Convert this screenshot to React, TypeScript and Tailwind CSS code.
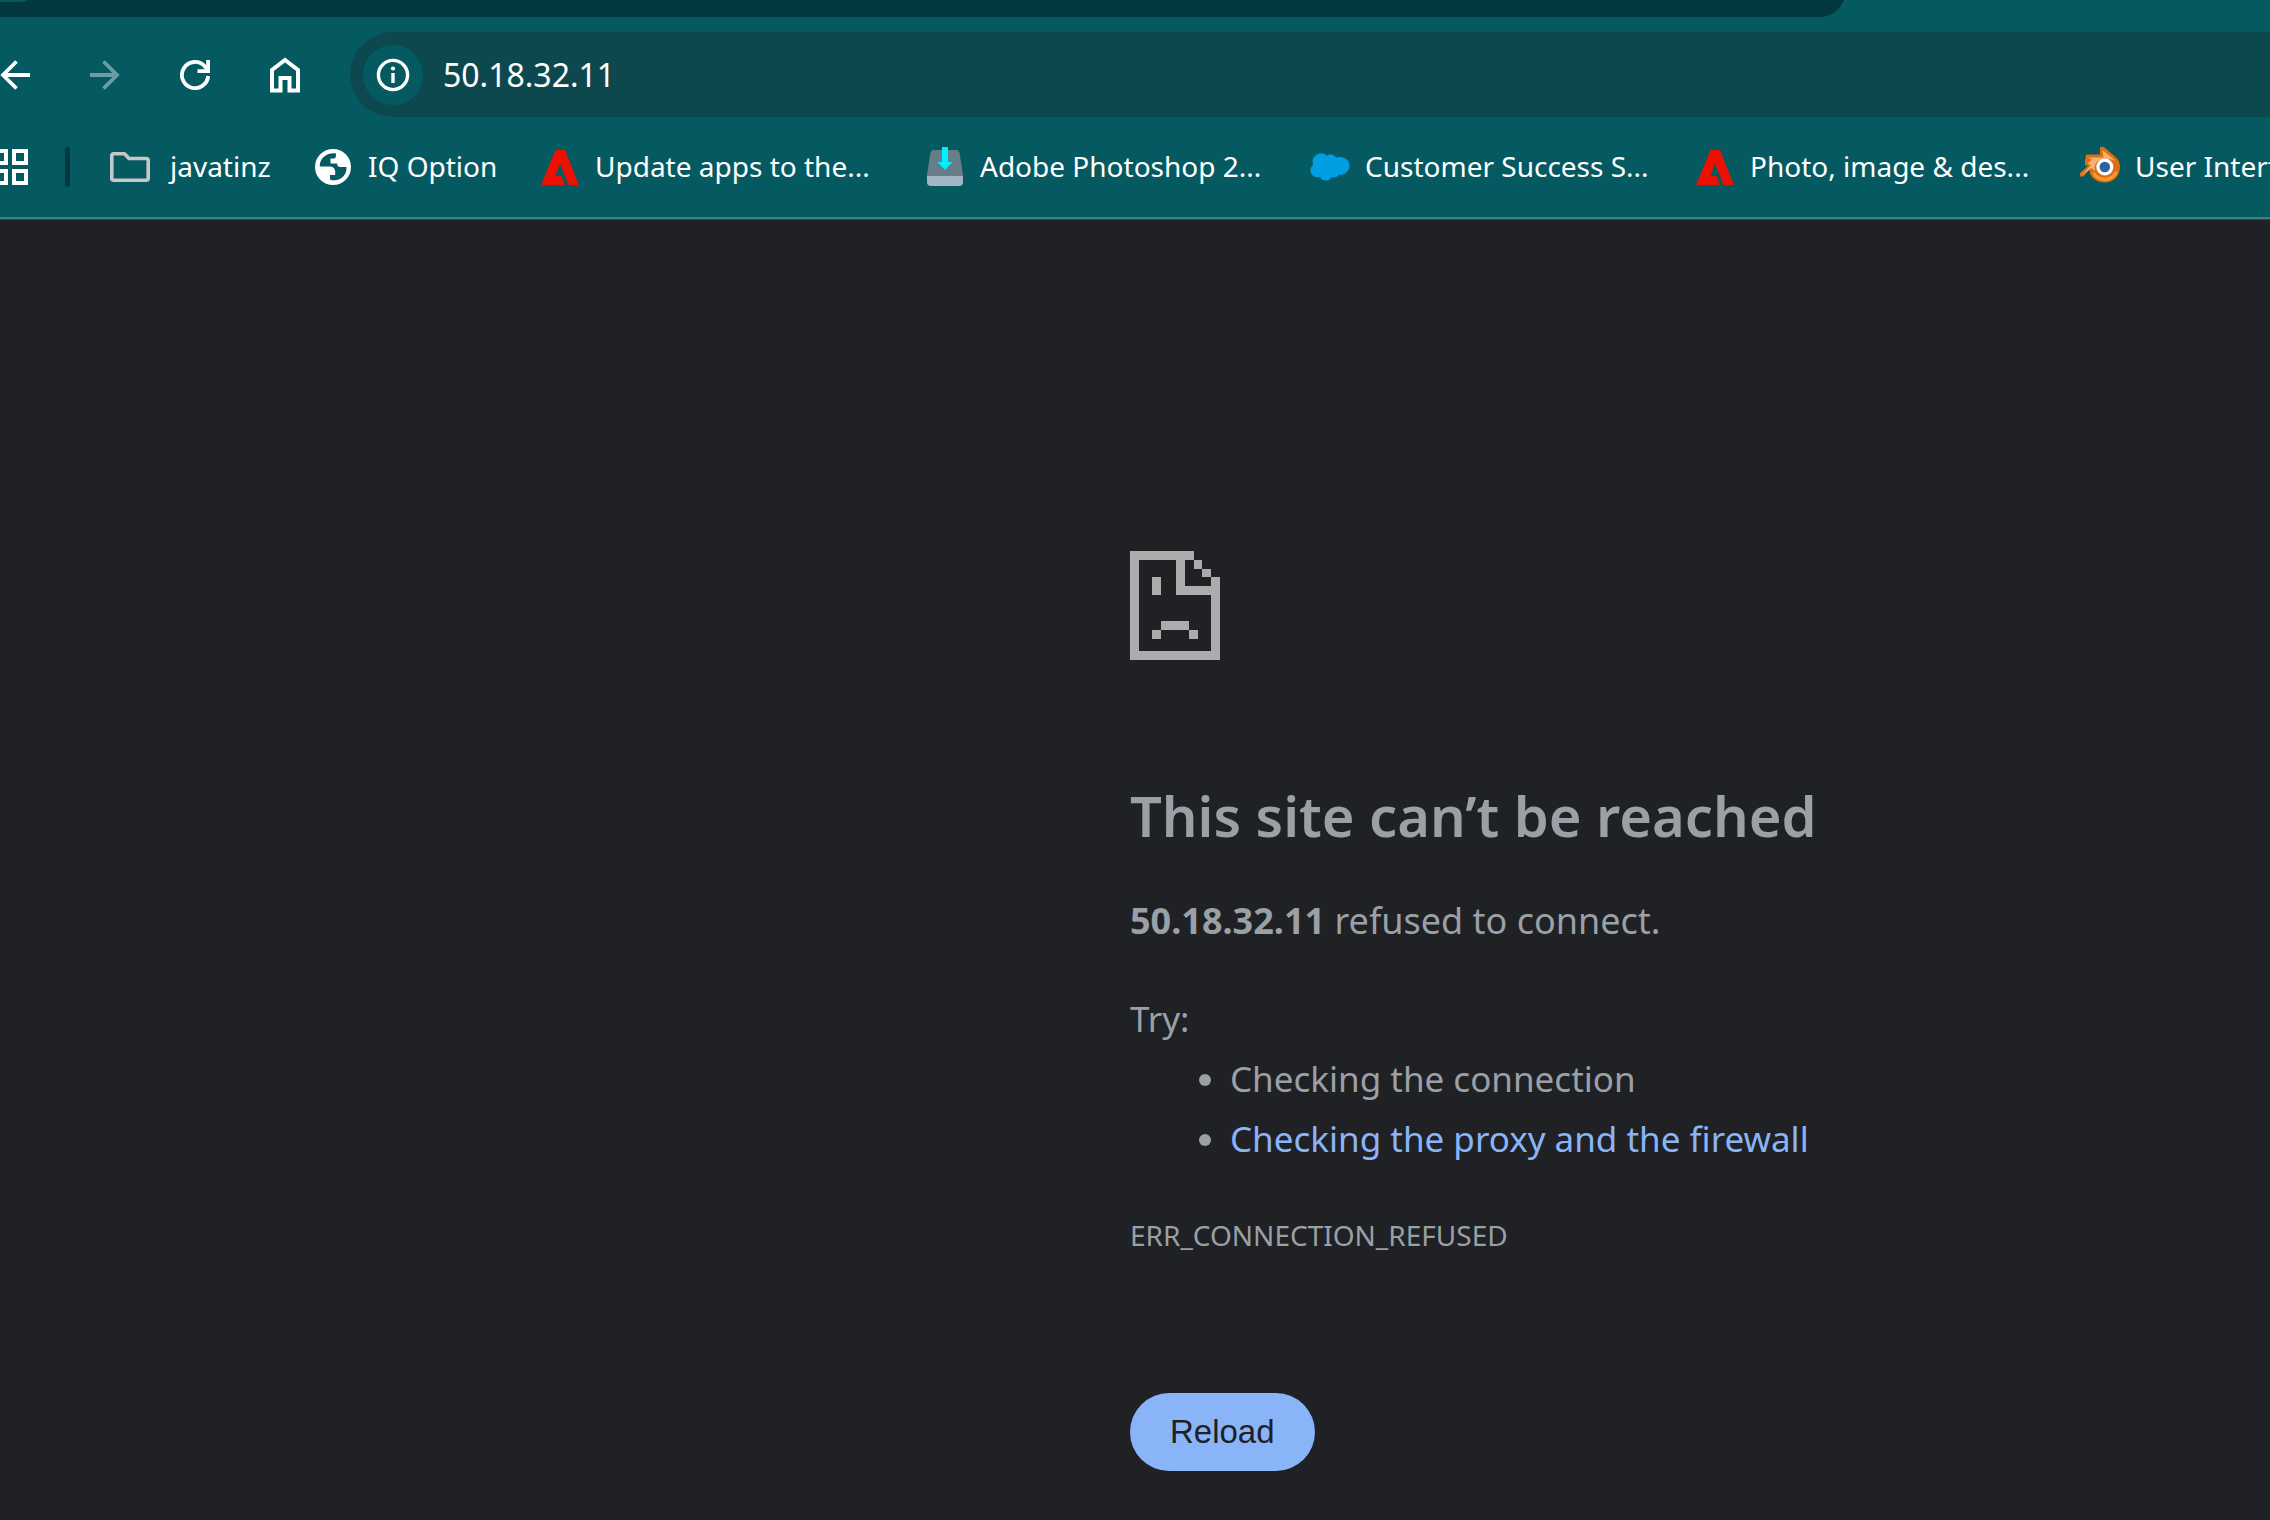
import type { ReactNode } from "react";

function BackIcon() {
  return (
    <svg width="30" height="30" viewBox="0 0 30 30" fill="none" stroke="currentColor" strokeWidth="3.8">
      <path d="M30 15H3M16.5 1.5L3 15L16.5 28.5" />
    </svg>
  );
}

function ForwardIcon() {
  return (
    <svg width="30" height="30" viewBox="0 0 30 30" fill="none" stroke="currentColor" strokeWidth="3.8">
      <path d="M0 15H27M13.500 1.500L27 15L13.500 28.500" />
    </svg>
  );
}

function ReloadIcon() {
  return (
    <svg width="30" height="30" viewBox="0 0 30 30" fill="none" stroke="currentColor" strokeWidth="3.8">
      <path d="M28.100 16A13.100 13.100 0 1 1 24.700 6.200L28 10" />
      <path d="M28.100 0V11.100H17.500" />
    </svg>
  );
}

function HomeIcon() {
  return (
    <svg width="30" height="36" viewBox="0 0 30 36" fill="none" stroke="currentColor" strokeWidth="4">
      <path d="M2 33.500V13L15 3L28 13V33.500H19.500V21H10.500V33.500Z" />
    </svg>
  );
}

function InfoIcon() {
  return (
    <svg width="34" height="34" viewBox="0 0 34 34" fill="none" stroke="currentColor">
      <circle cx="17" cy="17" r="14.600" strokeWidth="3.400" />
      <path d="M17 15V25" strokeWidth="3.400" />
      <circle cx="17" cy="10.500" r="2.100" fill="currentColor" stroke="none" />
    </svg>
  );
}

function AppsIcon() {
  return (
    <svg width="36" height="36" viewBox="0 0 36 36" fill="none" stroke="currentColor" strokeWidth="4">
      <path d="M2 2H14V14H2ZM22 2H34V14H22ZM2 22H14V34H2ZM22 22H34V34H22Z" />
    </svg>
  );
}

function FolderIcon() {
  return (
    <svg width="40" height="30" viewBox="0 0 40 30" fill="none" stroke="#c7c7c7" strokeWidth="3.600" strokeLinejoin="round">
      <path d="M3.800 1.800H14.500L19 6.500H36.200Q38.200 6.500 38.200 8.500V26.200Q38.200 28.200 36.200 28.200H3.800Q1.800 28.200 1.800 26.200V3.800Q1.800 1.800 3.800 1.800Z" />
    </svg>
  );
}

function GlobeIcon() {
  return (
    <svg width="36" height="36" viewBox="0 0 36 36">
      <circle cx="18" cy="18" r="18" fill="#fff" />
      <path
        d="M21 4.500C14 3.500 8 7 5.500 12.500C5 14.500 4.600 16 4.800 17.500H15.500C18.500 18 20.200 19.800 20.200 22.500V26H15V30.500C17.500 32 23 31.500 26.500 29C30.500 26 31.800 22 31.400 18H25.500C23 18 22.200 17 22.200 14.500H15.500V9.500H19.500C20.800 9 21 7.500 21 4.500Z"
        fill="#055a61"
      />
    </svg>
  );
}

function AdobeIcon() {
  return (
    <svg width="38" height="35" viewBox="0 0 38 35">
      <path d="M14.500 0H24L38 35H27.500L19 13.500L14.500 26H20.500L24 35H0Z" fill="#eb1000" />
    </svg>
  );
}

function DriveIcon() {
  return (
    <svg width="36" height="40" viewBox="0 0 36 40">
      <path d="M6.500 3H29.500Q32 3 32.500 5.500L36 28H0L3.500 5.500Q4 3 6.500 3Z" fill="#667d8a" />
      <path d="M0 28.500H36V35Q36 39 32 39H4Q0 39 0 35Z" fill="#a2b6c3" />
      <path d="M15 0H21V15H25.500L18 23L10.500 15H15Z" fill="#00f0ff" />
    </svg>
  );
}

function CloudIcon() {
  return (
    <svg width="40" height="28" viewBox="0 0 40 28">
      <path
        d="M11 .5C14 .2 16 1.500 17 3C19.500 .8 24 1 26 4.500C33 2.500 39.500 6.500 39.500 12.500C39.500 18.500 34 22.500 29 21.500C27.500 24 24.500 25 21.500 24C20 27 17.500 28 15 27.500C12.500 27.300 10.800 25.800 10 24C5 25.500 .5 22 .5 17.500C.5 14.800 1.500 13 3.200 12C1 6 5 .8 11 .5Z"
        fill="#009ee3"
      />
    </svg>
  );
}

function BlenderIcon() {
  return (
    <svg width="40" height="40" viewBox="0 0 40 40">
      <path
        d="M20 0H24L31.500 6.500L37 11.500Q40 15 40 20Q39.500 28 34.500 32Q30 35.500 25 35.500Q18 35.500 13 31Q10 28 9 23L3.500 29.500H0V26L8.500 18.500H5V13.500L6 7.500H20Z"
        fill="#dd6f12"
      />
      <path
        d="M22.500 3L30.500 9.500L35.500 14Q31 11.500 25 11.500Q18 12 15.500 17Q14 20 15 24L11.500 21L2 28L11 18L7.500 16.500L12 12.500L7.500 10.500H23.500Z"
        fill="#f6b172"
      />
      <path d="M13.500 26Q17 32 25 32.500Q33 32 36.500 25" stroke="#ff9a36" strokeWidth="3" fill="none" />
      <circle cx="24.800" cy="20" r="8.500" fill="#fff" />
      <circle cx="24.800" cy="20" r="5.300" fill="#2c60a8" />
    </svg>
  );
}

function SadPageIcon() {
  return (
    <svg width="90" height="109" viewBox="60 63 270 327" fill="#acacac" shapeRendering="crispEdges" aria-hidden="true">
      <path d="M60 63H251V90H225V168H303V142H330V390H60ZM86 90V363H303V195H198V90Z" fillRule="evenodd" />
      <path d="M251 90H277V116H251ZM277 116H303V142H277Z" />
      <path d="M127 142H154V195H127ZM154 273H236V300H154ZM127 300H154V326H127ZM236 300H263V326H236Z" />
    </svg>
  );
}

function Bookmark({ icon, label, width, gap }: { icon: ReactNode; label: string; width: string; gap: string }) {
  return (
    <a href="#" className={`flex shrink-0 items-center ${gap} ${width}`}>
      <span className="flex w-10 shrink-0 justify-center">{icon}</span>
      <span className="pb-[2px] whitespace-nowrap">{label}</span>
    </a>
  );
}

const bookmarks = [
  { label: "javatinz", icon: <FolderIcon />, width: "w-[203px]", gap: "gap-5" },
  { label: "IQ Option", icon: <GlobeIcon />, width: "w-[227px]", gap: "gap-[15px]" },
  { label: "Update apps to the...", icon: <AdobeIcon />, width: "w-[385px]", gap: "gap-[15px]" },
  { label: "Adobe Photoshop 2...", icon: <DriveIcon />, width: "w-[385px]", gap: "gap-[15px]" },
  { label: "Customer Success S...", icon: <CloudIcon />, width: "w-[385px]", gap: "gap-[15px]" },
  { label: "Photo, image & des...", icon: <AdobeIcon />, width: "w-[385px]", gap: "gap-[15px]" },
  { label: "User Interf", icon: <BlenderIcon />, width: "w-[385px]", gap: "gap-[15px]" },
];

export default function App() {
  return (
    <div className="min-h-screen overflow-hidden bg-[#202124] font-['Noto_Sans',sans-serif]">
      <header className="border-b border-[#055a61] bg-[#055a61] text-white">
        <div className="flex h-[17px] items-end overflow-hidden">
          <div className="relative h-8 w-[1845px] shrink-0 rounded-br-[25px] bg-[#02383d]">
            <div className="absolute top-0 left-0 h-[17px] w-9 rounded-br-2xl bg-[#055a61]" />
          </div>
        </div>

        <div className="flex items-center pt-[15px]">
          <div className="flex items-center gap-[60px]">
            <button type="button" aria-label="Back">
              <BackIcon />
            </button>
            <button type="button" aria-label="Forward" disabled className="text-[#6a9ea2]">
              <ForwardIcon />
            </button>
            <button type="button" aria-label="Reload page">
              <ReloadIcon />
            </button>
            <button type="button" aria-label="Home">
              <HomeIcon />
            </button>
          </div>
          <div className="ml-[50px] flex h-[85px] flex-1 items-center rounded-l-full bg-[#0e484f] pl-[13px]">
            <button
              type="button"
              aria-label="View site information"
              className="flex size-[60px] items-center justify-center rounded-full bg-[#055a61]"
            >
              <InfoIcon />
            </button>
            <input
              aria-label="Address"
              defaultValue="50.18.32.11"
              className="ml-5 min-w-0 flex-1 bg-transparent text-[32px] leading-[44px] outline-none"
            />
          </div>
        </div>

        <nav aria-label="Bookmarks" className="flex h-[100px] items-center overflow-hidden text-[28px] leading-10">
          <button type="button" aria-label="Apps" className="-ml-2 shrink-0">
            <AppsIcon />
          </button>
          <span className="mr-10 ml-[37px] h-10 w-[5px] shrink-0 rounded-full bg-[#02383d]" />
          {bookmarks.map((b) => (
            <Bookmark key={b.label} {...b} />
          ))}
        </nav>
        <div className="h-[2px] bg-[#3c7f83]" />
      </header>

      <main className="flex flex-col items-start pt-[331px] pl-[1130px] text-[35px] leading-[60px] text-[#9aa0a6]">
        <SadPageIcon />
        <h1 className="mt-[117px] text-[56px] leading-[76px] font-semibold whitespace-nowrap">
          This site can’t be reached
        </h1>
        <p className="mt-[38px] text-[36px]">
          <strong className="font-bold">50.18.32.11</strong> refused to connect.
        </p>
        <p className="mt-[38px]">Try:</p>
        <ul className="list-disc pl-[100px] whitespace-nowrap">
          <li>Checking the connection</li>
          <li>
            <a href="#" className="text-[#8ab4f8]">
              Checking the proxy and the firewall
            </a>
          </li>
        </ul>
        <p className="mt-11 text-[28px] leading-[44px]">ERR_CONNECTION_REFUSED</p>
        <button
          type="button"
          className="mt-[136px] h-[78px] rounded-full bg-[#8ab4f8] px-10 font-['Liberation_Sans',sans-serif] text-[33px] leading-[44px] text-[#202124]"
        >
          Reload
        </button>
      </main>
    </div>
  );
}
